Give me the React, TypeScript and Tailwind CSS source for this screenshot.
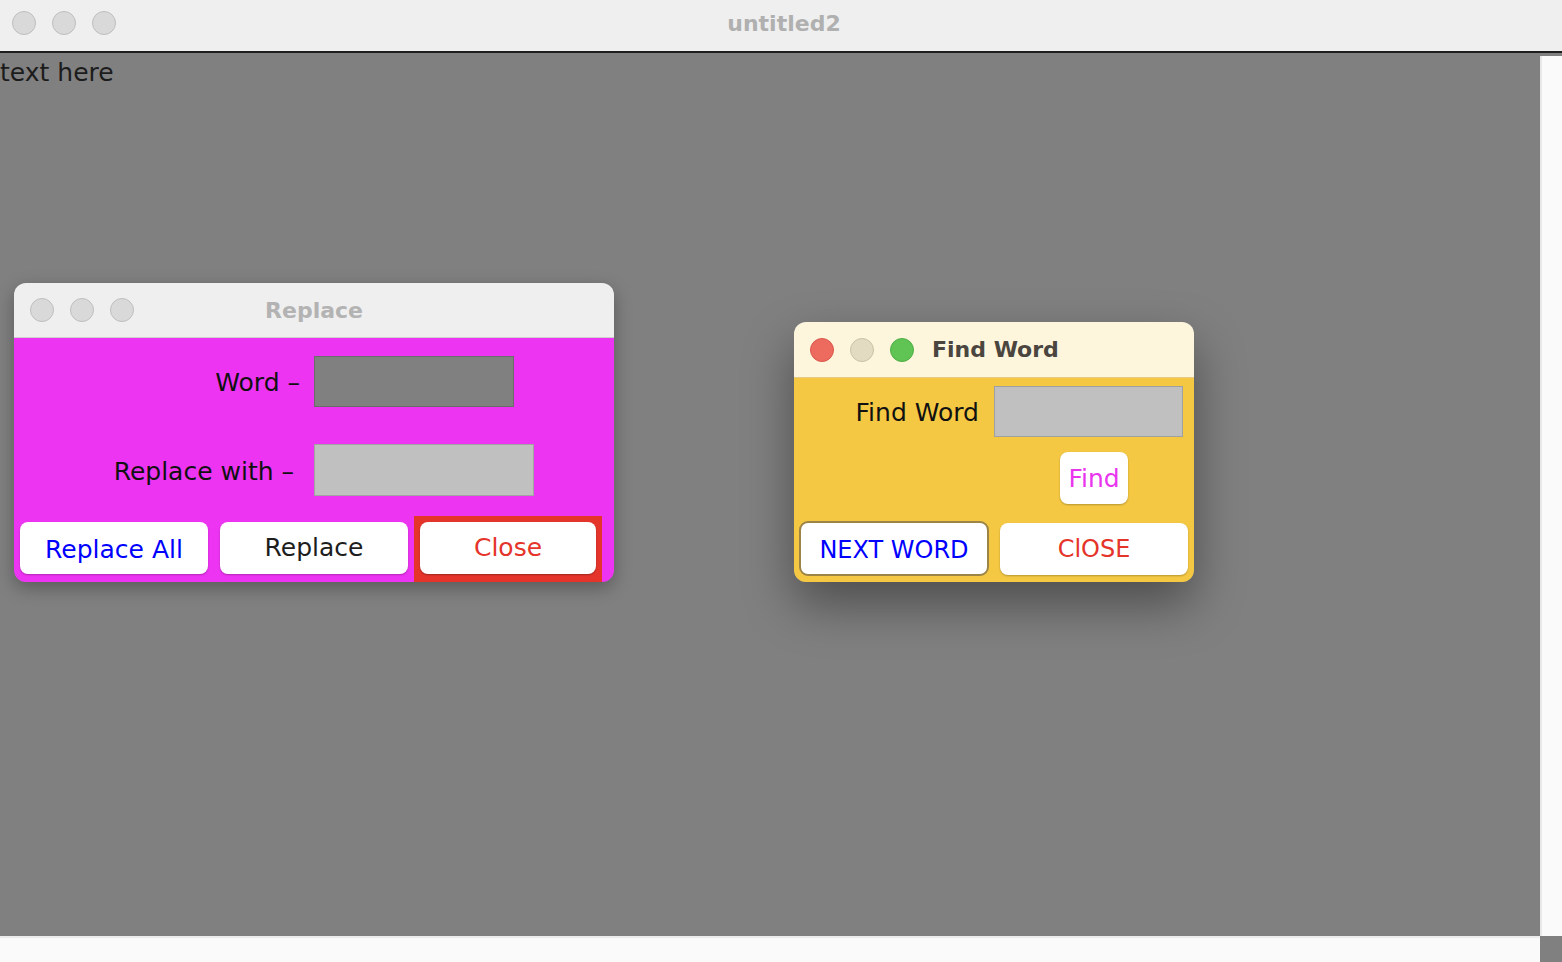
import React from "react";

type Light = { fill: string; edge: string };

const grayLights: Light[] = [
  { fill: "bg-[#d9d9d9]", edge: "border-[#bfbfbf]" },
  { fill: "bg-[#d9d9d9]", edge: "border-[#bfbfbf]" },
  { fill: "bg-[#d9d9d9]", edge: "border-[#bfbfbf]" },
];

const findLights: Light[] = [
  { fill: "bg-[#ec6a5e]", edge: "border-[#d9574b]" },
  { fill: "bg-[#e2dbc2]", edge: "border-[#cbc3a6]" },
  { fill: "bg-[#5fc454]", edge: "border-[#4fae45]" },
];

function Lights({ lights }: { lights: Light[] }) {
  return (
    <div className="flex items-center gap-[16px]">
      {lights.map((l, i) => (
        <span key={i} className={`block w-[24px] h-[24px] rounded-full border ${l.fill} ${l.edge}`} />
      ))}
    </div>
  );
}

function ReplaceDialog() {
  return (
    <div className="absolute left-[14px] top-[230px] w-[600px] h-[299px] rounded-[12px] overflow-hidden flex flex-col shadow-[0_6px_18px_rgba(0,0,0,0.3)]">
      <div className="h-[55px] shrink-0 bg-[#efefef] border-b border-[#cfcfcf] grid grid-cols-[1fr_auto_1fr] items-center px-[16px]">
        <Lights lights={grayLights} />
        <div className="text-[22px] font-bold text-[#b3b3b3]">Replace</div>
        <div />
      </div>

      <div className="flex-1 bg-[#ed34f2] flex flex-col pt-[18px] text-[25px] text-[#111]">
        <div className="flex items-center">
          <div className="w-[300px] pr-[14px] pt-[3px] text-right">Word –</div>
          <div className="w-[200px] h-[51px] bg-[#808080] border border-[#6b6b6b]" />
        </div>
        <div className="flex items-center mt-[37px]">
          <div className="w-[300px] pr-[20px] pt-[3px] text-right">Replace with –</div>
          <div className="w-[220px] h-[52px] bg-[#c0c0c0] border border-[#a2a2a2]" />
        </div>

        <div className="flex items-start mt-[20px] h-[66px] pl-[6px]">
          <button className="mt-[6px] pt-[4px] w-[188px] h-[52px] rounded-[8px] bg-white text-[#0000ff] shadow-[0_1px_2px_rgba(0,0,0,0.25)]">
            Replace All
          </button>
          <button className="mt-[6px] ml-[12px] w-[188px] h-[52px] rounded-[8px] bg-white text-[#1d1d1d] shadow-[0_1px_2px_rgba(0,0,0,0.25)]">
            Replace
          </button>
          <div className="ml-[6px] w-[188px] h-[66px] bg-[#e5352b] pt-[6px] pl-[6px]">
            <button className="w-[176px] h-[52px] rounded-[8px] bg-white text-[#e5352b] shadow-[0_1px_2px_rgba(0,0,0,0.3)]">
              Close
            </button>
          </div>
        </div>
      </div>
    </div>
  );
}

function FindDialog() {
  return (
    <div className="absolute left-[794px] top-[269px] w-[400px] h-[260px] rounded-[12px] overflow-hidden flex flex-col shadow-[0_22px_50px_rgba(0,0,0,0.4)]">
      <div className="h-[56px] shrink-0 bg-[#fdf5dc] border-b border-[#e6cd86] flex items-center px-[16px]">
        <Lights lights={findLights} />
        <div className="ml-[18px] text-[22px] font-bold text-[#4a463f]">Find Word</div>
      </div>

      <div className="flex-1 bg-[#f5c843] flex flex-col pt-[8px] text-[25px] text-[#111]">
        <div className="flex items-center">
          <div className="w-[200px] pr-[15px] pt-[3px] text-right">Find Word</div>
          <div className="w-[189px] h-[51px] bg-[#c0c0c0] border border-[#a0a0a0]" />
        </div>

        <button className="mt-[15px] ml-[266px] pt-[2px] w-[68px] h-[52px] rounded-[8px] bg-white text-[#ea35ef] shadow-[0_1px_2px_rgba(0,0,0,0.25)]">
          Find
        </button>

        <div className="flex items-center mt-[17px] pl-[5px] text-[24px]">
          <button className="pt-[2px] w-[190px] h-[55px] rounded-[9px] bg-white border-2 border-[#9c8447] text-[#0000ff]">
            NEXT WORD
          </button>
          <button className="ml-[11px] w-[188px] h-[52px] rounded-[8px] bg-white text-[#e5352b] shadow-[0_1px_2px_rgba(0,0,0,0.25)]">
            ClOSE
          </button>
        </div>
      </div>
    </div>
  );
}

export default function App() {
  return (
    <div className="w-[1562px] h-[962px] flex flex-col overflow-hidden bg-[#808080] font-['DejaVu_Sans',sans-serif]">
      <header className="h-[53px] shrink-0 bg-[#efefef] border-b-2 border-[#1e1e1e] grid grid-cols-[1fr_auto_1fr] items-center px-[12px] pb-[5px]">
        <Lights lights={grayLights} />
        <div className="pl-[6px] text-[22px] font-bold text-[#b0b0b0]">untitled2</div>
        <div />
      </header>

      <div className="flex flex-1 min-h-0">
        <main className="relative flex-1 bg-[#808080]">
          <p className="pt-[6px] text-[25px] leading-[28px] text-[#1c1c1c]">text here</p>
          <ReplaceDialog />
          <FindDialog />
        </main>
        <div className="w-[22px] pt-[3px] bg-[#808080]">
          <div className="h-full bg-[#fafafa] border-l-2 border-[#e8e8e8]" />
        </div>
      </div>

      <div className="h-[26px] shrink-0 flex">
        <div className="flex-1 bg-[#fafafa] border-t-2 border-[#ececec]" />
        <div className="w-[22px] bg-[#808080]" />
      </div>
    </div>
  );
}
